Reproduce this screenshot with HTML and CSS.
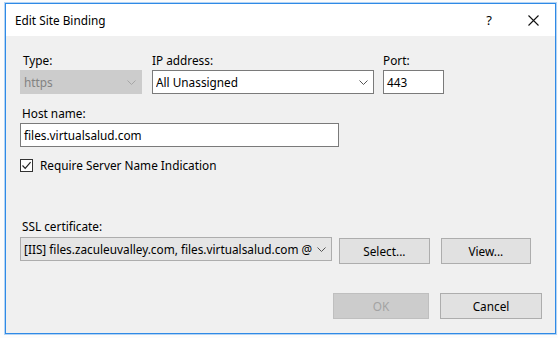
FILE: index.html
```html
<!DOCTYPE html>
<html lang="en">
<head>
    <meta charset="UTF-8">
    <title>Edit Site Binding</title>
    <link rel="stylesheet" href="styles.css">
</head>
<body>
    <div class="window">
        <div class="titlebar">
            <span class="title">Edit Site Binding</span>
            <span class="help">?</span>
            <span class="close">
                <svg width="11" height="11" viewBox="0 0 11 11">
                    <path d="M0.5 0.5L10.5 10.5M10.5 0.5L0.5 10.5" stroke="#111" stroke-width="1.1"></path>
                </svg>
            </span>
        </div>

        <div class="content">
            <div class="row-top">
                <div class="field field-type">
                    <label class="label">Type:</label>
                    <div class="combo combo-disabled">
                        <span class="combo-text">https</span>
                        <svg class="chevron" width="9" height="5" viewBox="0 0 9 5">
                            <path d="M0.5 0.5L4.5 4.5L8.5 0.5" fill="none" stroke="#a6a6a6" stroke-width="1"></path>
                        </svg>
                    </div>
                </div>
                <div class="field field-ip">
                    <label class="label label-flush">IP address:</label>
                    <div class="combo">
                        <span class="combo-text">All Unassigned</span>
                        <svg class="chevron" width="9" height="5" viewBox="0 0 9 5">
                            <path d="M0.5 0.5L4.5 4.5L8.5 0.5" fill="none" stroke="#555" stroke-width="1"></path>
                        </svg>
                    </div>
                </div>
                <div class="field field-port">
                    <label class="label label-flush">Port:</label>
                    <div class="textbox">443</div>
                </div>
            </div>

            <div class="field field-host">
                <label class="label">Host name:</label>
                <div class="textbox">files.virtualsalud.com</div>
            </div>

            <div class="check-row">
                <span class="checkbox">
                    <svg width="11" height="11" viewBox="0 0 11 11">
                        <path d="M1.5 5.5L4.2 8.3L9.6 2.2" fill="none" stroke="#222" stroke-width="1.2"></path>
                    </svg>
                </span>
                <span class="check-label">Require Server Name Indication</span>
            </div>

            <div class="field field-ssl">
                <label class="label">SSL certificate:</label>
                <div class="ssl-row">
                    <div class="combo combo-ssl">
                        <span class="combo-text">[IIS] files.zaculeuvalley.com, files.virtualsalud.com @</span>
                        <svg class="chevron" width="9" height="5" viewBox="0 0 9 5">
                            <path d="M0.5 0.5L4.5 4.5L8.5 0.5" fill="none" stroke="#555" stroke-width="1"></path>
                        </svg>
                    </div>
                    <button class="btn btn-small">Select...</button>
                    <button class="btn btn-small">View...</button>
                </div>
            </div>

            <div class="dialog-buttons">
                <button class="btn btn-ok" disabled>OK</button>
                <button class="btn btn-cancel">Cancel</button>
            </div>
        </div>
    </div>
</body>
</html>
```

FILE: styles.css
```css
* {
    box-sizing: border-box;
    margin: 0;
    padding: 0;
}

body {
    font-family: "Noto Sans", "Open Sans", sans-serif;
    font-size: 11.8px;
    color: #000;
    background: #fcfcfc;
    width: 558px;
    height: 338px;
    overflow: hidden;
    padding: 3px 0 0 5px;
}

.window {
    width: 551px;
    height: 331px;
    border: 1px solid #2f8ae6;
    box-shadow: 0 0 0 1px rgba(47, 138, 230, 0.35);
    display: flex;
    flex-direction: column;
    background: #f0f0f0;
}

.titlebar {
    height: 32px;
    background: #fff;
    display: flex;
    align-items: center;
    padding-left: 9px;
}

.title {
    flex: 1;
}

.help {
    font-size: 13px;
    width: 46px;
    text-align: center;
    margin-right: -2px;
}

.close {
    width: 46px;
    display: flex;
    justify-content: center;
    align-items: center;
    margin-right: -1px;
}

.content {
    flex: 1;
    padding: 16px 13px 0 14px;
}

.label {
    display: block;
    line-height: 16px;
    height: 16px;
    padding-left: 3px;
    margin-bottom: 2px;
}

.label-flush {
    padding-left: 0;
}

.row-top {
    display: flex;
}

.field-type {
    width: 122px;
    margin-right: 10px;
}

.field-ip {
    width: 222px;
    margin-right: 9px;
}

.field-port {
    width: 61px;
}

.combo,
.textbox {
    height: 24px;
    border: 1px solid #7a7a7a;
    background: #fff;
    display: flex;
    align-items: center;
    padding: 0 4px 0 3px;
    white-space: nowrap;
    overflow: hidden;
}

.combo-text {
    flex: 1;
    overflow: hidden;
}

.chevron {
    flex-shrink: 0;
    margin-left: 4px;
    margin-right: 1px;
}

.combo-disabled {
    background: #cccccc;
    border-color: #cccccc;
    color: #838383;
}

.field-host {
    margin-top: 11px;
    width: 319px;
}

.field-host .label {
    padding-left: 2px;
}

.check-row {
    display: flex;
    align-items: center;
    margin-top: 11px;
    height: 14px;
}

.checkbox {
    width: 13px;
    height: 13px;
    border: 1px solid #333;
    background: #fff;
    display: flex;
    align-items: center;
    justify-content: center;
    margin-right: 7px;
}

.field-ssl {
    margin-top: 46px;
}

.field-ssl .label {
    padding-left: 2px;
    margin-bottom: 3px;
}

.ssl-row {
    display: flex;
    align-items: flex-start;
}

.combo-ssl {
    width: 314px;
    background: #e5e5e5;
    border-color: #adadad;
    margin-right: 7px;
}

.btn {
    font-family: inherit;
    font-size: 11.8px;
    color: #000;
    background: #e1e1e1;
    border: 1px solid #adadad;
    height: 26px;
}

.btn-small {
    width: 91px;
    margin-top: 1px;
    margin-right: 11px;
}

.dialog-buttons {
    display: flex;
    justify-content: flex-end;
    gap: 11px;
    margin-top: 29px;
}

.btn-ok {
    width: 96px;
    background: #cccccc;
    border-color: #bfbfbf;
    color: #a3a3a3;
}

.btn-cancel {
    width: 102px;
}
```
